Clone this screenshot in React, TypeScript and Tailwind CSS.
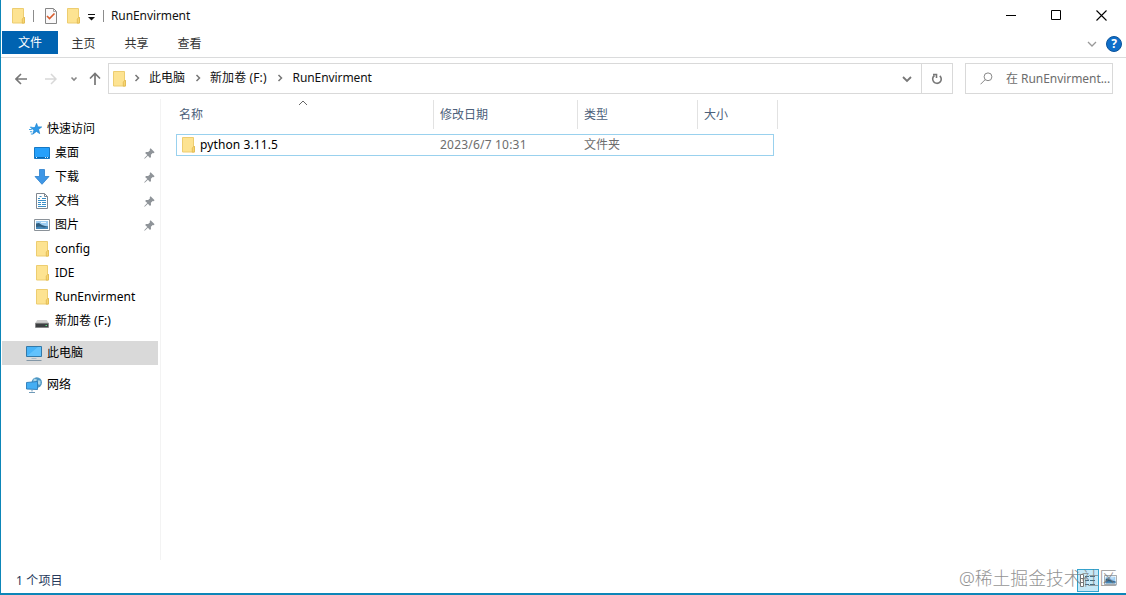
import type { ReactNode } from "react";

const Folder = ({ className = "" }: { className?: string }) => (
  <svg className={`h-4 w-[13px] shrink-0 ${className}`} viewBox="0 0 13 16">
    <path d="M.5.5h11v9h1v5.500h-12z" fill="#fde391" stroke="#edcd70" />
    <path d="M10.300 15.200v-4l1.200-1.700h1v5.500z" fill="#f7d673" stroke="#dfb84f" strokeWidth=".8" />
  </svg>
);

const Chevron = ({ d, className }: { d: string; className: string }) => (
  <svg className={`shrink-0 ${className}`} viewBox="0 0 10 10" fill="none" stroke="currentColor">
    <path d={d} />
  </svg>
);

const Pin = () => (
  <svg className="ml-auto h-[11px] w-[11px] shrink-0" viewBox="0 0 11 11">
    <path d="M6.600.2l4 4-1.100 1-.8-.2-1.800 1.800.1 2.100-1 1-2.100-2.200L.7 10.800l-.5-.5 3.100-3.200-2.200-2.100 1-1 2.100.1L6 2.300l-.3-1z" fill="#8f9499" />
  </svg>
);

const Star = () => (
  <svg className="ml-[2px] h-[12px] w-[13px] shrink-0" viewBox="0 0 14 13">
    <path d="M8.200.5l1.300 3.700 4.200.1-3.400 2.600 1.200 4.600-3.500-2.400-3.900 3 1.300-4.300-3.200-2.600 4.200-.2z" fill="#2e9aea" stroke="#1a82d0" strokeWidth=".8" />
    <path d="M1 4.500h2.500M0 7h3M1 9.500h2.500M2 12h2" stroke="#3ba2e8" strokeWidth="1.100" />
  </svg>
);

const Desktop = () => (
  <svg className="h-3 w-4 shrink-0" viewBox="0 0 16 12">
    <path d="M.5.5h15v11H.5z" fill="#25a0fb" stroke="#1678c4" />
    <path d="M1 10.500h14" stroke="#0867b1" />
    <path d="M2 10.500h1M11 10.500h1M13 10.500h1" stroke="#d9f0ff" />
  </svg>
);

const Download = () => (
  <svg className="h-4 w-4 shrink-0" viewBox="0 0 16 16">
    <path d="M5.500.5h5v7h4.500L8 15.300 1 7.500h4.500z" fill="#3f97e6" stroke="#2b7fcc" strokeWidth=".8" />
  </svg>
);

const Document = () => (
  <svg className="h-4 w-4 shrink-0" viewBox="0 0 16 16">
    <path d="M2.500.5h8l3 3v12h-11z" fill="#fff" stroke="#7f8790" />
    <path d="M10.500.5v3h3" fill="none" stroke="#7f8790" />
    <path d="M4 5.500h2M8 5.500h4M4 7.500h8M4 9.500h3M8 9.500h4M4 11.500h3M8 11.500h4M4 13.500h8M5.500 3.500h2" stroke="#3a8fc7" />
  </svg>
);

const Picture = ({ className = "h-3 w-4" }: { className?: string }) => (
  <svg className={`shrink-0 ${className}`} viewBox="0 0 16 12">
    <path d="M.5.5h15v11H.5z" fill="#fff" stroke="#8b9299" />
    <path d="M2 2h12v8H2z" fill="#9dcdf2" />
    <path d="M2 4.500l3-.5 3 2 3 1 3 .5V10H2z" fill="#2f5e80" />
    <path d="M2 8l4-.5 4 1 4-1V10H2z" fill="#4788b8" />
    <path d="M7 3.500h5" stroke="#e9f5fd" />
  </svg>
);

const Drive = () => (
  <svg className="mt-[5px] h-2 w-[14px] shrink-0" viewBox="0 0 14 8">
    <path d="M2.300 0h9.400L14 3.500H0z" fill="#cfcfcf" />
    <path d="M.5 3.300h13v4.200H.5z" fill="#3c3f41" stroke="#777" strokeWidth=".6" />
    <path d="M10.500 5.500h1.500" stroke="#55e07d" />
  </svg>
);

const Computer = () => (
  <svg className="h-4 w-4 shrink-0" viewBox="0 0 16 16">
    <path d="M.5 1.500h15v10H.5z" fill="#48b4f8" stroke="#3379a8" />
    <path d="M1 11L12 2h3v9z" fill="#75ccff" opacity=".6" />
    <path d="M5.500 13.500h5" stroke="#a9bac6" />
    <path d="M.5 15.500h15" stroke="#8297a7" />
  </svg>
);

const Network = () => (
  <svg className="h-4 w-4 shrink-0" viewBox="0 0 16 16">
    <circle cx="10.800" cy="5.500" r="5.200" fill="#4d97c4" />
    <path d="M8 1.500l3 1-1 2-3 .5M12.500 3l2 1v3l-1.500 1-1.500-2z" fill="#a8d5ea" />
    <path d="M.5 5.500l11-1v8l-11-.5z" fill="#44aef3" stroke="#2a7bb8" strokeWidth=".9" />
    <path d="M6 12.500v2M3 15.500h6" stroke="#6f9ab8" />
  </svg>
);

type NavProps = { icon: ReactNode; label: string; pinned?: boolean; top?: boolean; selected?: boolean };

const NavRow = ({ icon, label, pinned, top, selected }: NavProps) => (
  <div className={`flex h-6 items-center pr-[3px] ${top ? "pl-6" : "pl-8"} ${selected ? "bg-[#d9d9d9]" : ""}`}>
    <span className="flex w-4 justify-center">{icon}</span>
    <span className="ml-[5px] whitespace-nowrap">{label}</span>
    {pinned && <Pin />}
  </div>
);

const Crumb = ({ label, className }: { label: string; className: string }) => (
  <>
    <Chevron d="M3.500 2L6.500 5L3.500 8" className="h-[10px] w-[10px] stroke-[1.500] text-[#777]" />
    <span className={`whitespace-nowrap ${className}`}>{label}</span>
  </>
);

export default function App() {
  return (
    <div className="relative flex h-[595px] w-[1126px] flex-col overflow-hidden border-b-2 border-l border-[#0d86b8] bg-white font-['Noto_Sans','Noto_Sans_CJK_SC',sans-serif] text-[12px] leading-4 text-[#111]">
      <header className="flex h-[31px] shrink-0 items-center pl-[11px]">
        <Folder />
        <span className="ml-2 h-3 w-px bg-[#8c8c8c]" />
        <svg className="ml-[10px] h-4 w-[14px]" viewBox="0 0 14 16">
          <path d="M1.500.5h8l3 3v12h-11z" fill="#faf9fa" stroke="#858585" />
          <path d="M9.500.5v3h3" fill="none" stroke="#a5a5a5" />
          <path d="M3 8l2.500 2.500 5-5" fill="none" stroke="#d85c2c" strokeWidth="1.600" />
        </svg>
        <Folder className="ml-[9px]" />
        <svg className="ml-[7px] mt-[3px] h-[7px] w-[9px]" viewBox="0 0 9 7">
          <path d="M1 .5h7" stroke="#111" />
          <path d="M1 3h7L4.500 6.500z" fill="#111" />
        </svg>
        <span className="ml-[7px] h-3 w-px bg-[#8c8c8c]" />
        <h1 className="ml-[7px] tracking-[-0.09px]">RunEnvirment</h1>
        <div className="ml-auto mr-[19px] flex items-center">
          <svg className="h-[11px] w-[11px]" viewBox="0 0 11 11"><path d="M1 5.500h10" stroke="#000" /></svg>
          <svg className="ml-[34px] h-[11px] w-[11px]" viewBox="0 0 11 11"><path d="M1.500.5h9v9h-9z" fill="none" stroke="#000" /></svg>
          <svg className="ml-[35px] h-[11px] w-[11px]" viewBox="0 0 11 11"><path d="M.5.5l10 10M10.500.5l-10 10" stroke="#000" strokeWidth="1.100" /></svg>
        </div>
      </header>

      <nav className="flex h-[27px] shrink-0 border-b border-[#dadbdc] pl-px text-[#333]">
        <span className="flex h-[23px] w-14 items-center justify-center bg-[#0063b1] text-white">文件</span>
        <span className="-ml-px flex h-[25px] w-[53px] items-center justify-center">主页</span>
        <span className="flex h-[25px] w-[53px] items-center justify-center">共享</span>
        <span className="flex h-[25px] w-[53px] items-center justify-center">查看</span>
        <div className="ml-auto mr-[4px] flex items-center">
          <Chevron d="M1 3L5 7L9 3" className="h-[10px] w-[10px] stroke-[1.300] text-[#999]" />
          <span className="ml-[9px] flex h-4 w-4 items-center justify-center rounded-full border border-[#0b539b] bg-[#0f6ec9] text-[12px] font-bold text-white">?</span>
        </div>
      </nav>

      <div className="flex h-[41px] shrink-0 items-center pl-[14px]">
        <svg className="h-3 w-3" viewBox="0 0 12 12" fill="none" stroke="#777" strokeWidth="1.600"><path d="M12 6H1M6 1L1 6l5 5" /></svg>
        <svg className="ml-[18px] h-3 w-3" viewBox="0 0 12 12" fill="none" stroke="#d8d8d8" strokeWidth="1.500"><path d="M0 6h11M6 1l5 5-5 5" /></svg>
        <Chevron d="M2.500 3.500L5 6L7.500 3.500" className="ml-[12px] h-[10px] w-[10px] stroke-[1.600] text-[#888]" />
        <svg className="ml-[10px] h-[13px] w-[12px]" viewBox="0 0 12 13" fill="none" stroke="#777" strokeWidth="1.700"><path d="M6 13V1.500M1 6.500l5-5 5 5" /></svg>
        <div className="ml-[7px] flex h-[31px] w-[845px] items-center border border-[#d9d9d9]">
          <Folder className="ml-1" />
          <div className="-mt-px ml-[6px] flex items-center">
            <Crumb label="此电脑" className="ml-[7px] mr-[8px]" />
            <Crumb label="新加卷 (F:)" className="ml-[7px] mr-2 tracking-[0.1px]" />
            <Crumb label="RunEnvirment" className="ml-2 tracking-[-0.09px]" />
          </div>
          <Chevron d="M1 3L5 7L9 3" className="ml-auto mr-[9px] h-[10px] w-[10px] stroke-[1.800] text-[#777]" />
          <div className="flex h-full w-[31px] items-center justify-center border-l border-[#d9d9d9]">
            <svg className="h-3 w-3" viewBox="0 0 12 12" fill="none" stroke="#777" strokeWidth="1.600">
              <path d="M8.800 2.800A4.300 4.300 0 1 1 3.500 2.500M2 1.500h3.500V5" />
            </svg>
          </div>
        </div>
        <div className="ml-3 flex h-[31px] w-[148px] items-center overflow-hidden border border-[#d9d9d9] text-[#6d6d6d]">
          <svg className="ml-[14px] h-[13px] w-[13px] shrink-0" viewBox="0 0 13 13" fill="none" stroke="#888">
            <circle cx="8" cy="4.800" r="3.900" /><path d="M5.300 7.500L.5 12.300" />
          </svg>
          <span className="ml-[13px] whitespace-nowrap tracking-[-0.05px]">在 RunEnvirment...</span>
        </div>
      </div>

      <div className="flex min-h-0 flex-1">
        <aside className="flex h-[461px] w-[160px] shrink-0 flex-col border-r border-[#f3f3f3] pl-px pr-[2px] pt-[18px] text-black">
          <NavRow top icon={<Star />} label="快速访问" />
          <NavRow icon={<Desktop />} label="桌面" pinned />
          <NavRow icon={<Download />} label="下载" pinned />
          <NavRow icon={<Document />} label="文档" pinned />
          <NavRow icon={<Picture />} label="图片" pinned />
          <NavRow icon={<Folder />} label="config" />
          <NavRow icon={<Folder />} label="IDE" />
          <NavRow icon={<Folder />} label="RunEnvirment" />
          <NavRow icon={<Drive />} label="新加卷 (F:)" />
          <div className="h-2 shrink-0" />
          <NavRow top selected icon={<Computer />} label="此电脑" />
          <div className="h-2 shrink-0" />
          <NavRow top icon={<Network />} label="网络" />
        </aside>
        <main className="pl-[15px]">
          <div className="mt-px flex h-[29px] text-[#4c607a]">
            <div className="relative flex w-[258px] items-center border-r border-[#e2e2e2] pl-[3px]">
              名称
              <Chevron d="M1 7L5 3L9 7" className="absolute left-[122px] -top-[2px] h-[10px] w-[10px] text-[#666]" />
            </div>
            <div className="flex w-36 items-center border-r border-[#e2e2e2] pl-[6px]">修改日期</div>
            <div className="flex w-[120px] items-center border-r border-[#e2e2e2] pl-[6px]">类型</div>
            <div className="flex w-20 items-center border-r border-[#e2e2e2] pl-[6px]">大小</div>
          </div>
          <div className="mt-[5px] flex h-[22px] w-[598px] items-center border border-[#99d1ee] text-[#6d6d6d]">
            <div className="flex w-[263px] items-center pl-[5px] text-black"><Folder /><span className="ml-[5px] tracking-[0.1px]">python 3.11.5</span></div>
            <span className="w-36 tracking-[0.2px]">2023/6/7 10:31</span>
            <span>文件夹</span>
          </div>
        </main>
      </div>

      <footer className="flex h-[26px] shrink-0 items-center pl-[15px] text-[#26395b]">
        <span className="mt-[2px] tracking-[0.15px]">1 个项目</span>
        <div className="ml-auto mr-[9px] flex items-center">
          <div className="flex h-[23px] w-[22px] items-center justify-center border border-[#35a3ce] bg-[#c5e8f7]">
            <svg className="h-[13px] w-4" viewBox="0 0 16 13">
              <path d="M.5.5h3v12h-3z" fill="#fff" stroke="#777" />
              <path d="M1 4.500h2M1 8.500h2" stroke="#777" />
              <path d="M5 2.500h4M10 2.500h5M5 6.500h4M10 6.500h5M5 10.500h4M10 10.500h5" stroke="#456f86" />
            </svg>
          </div>
          <Picture className="ml-[5px] h-[10px] w-[13px]" />
        </div>
      </footer>
      <div className="pointer-events-none absolute bottom-px left-[958px] whitespace-nowrap text-[17.800px] font-light leading-7 text-[#777] opacity-80">@稀土掘金技术社区</div>
    </div>
  );
}
